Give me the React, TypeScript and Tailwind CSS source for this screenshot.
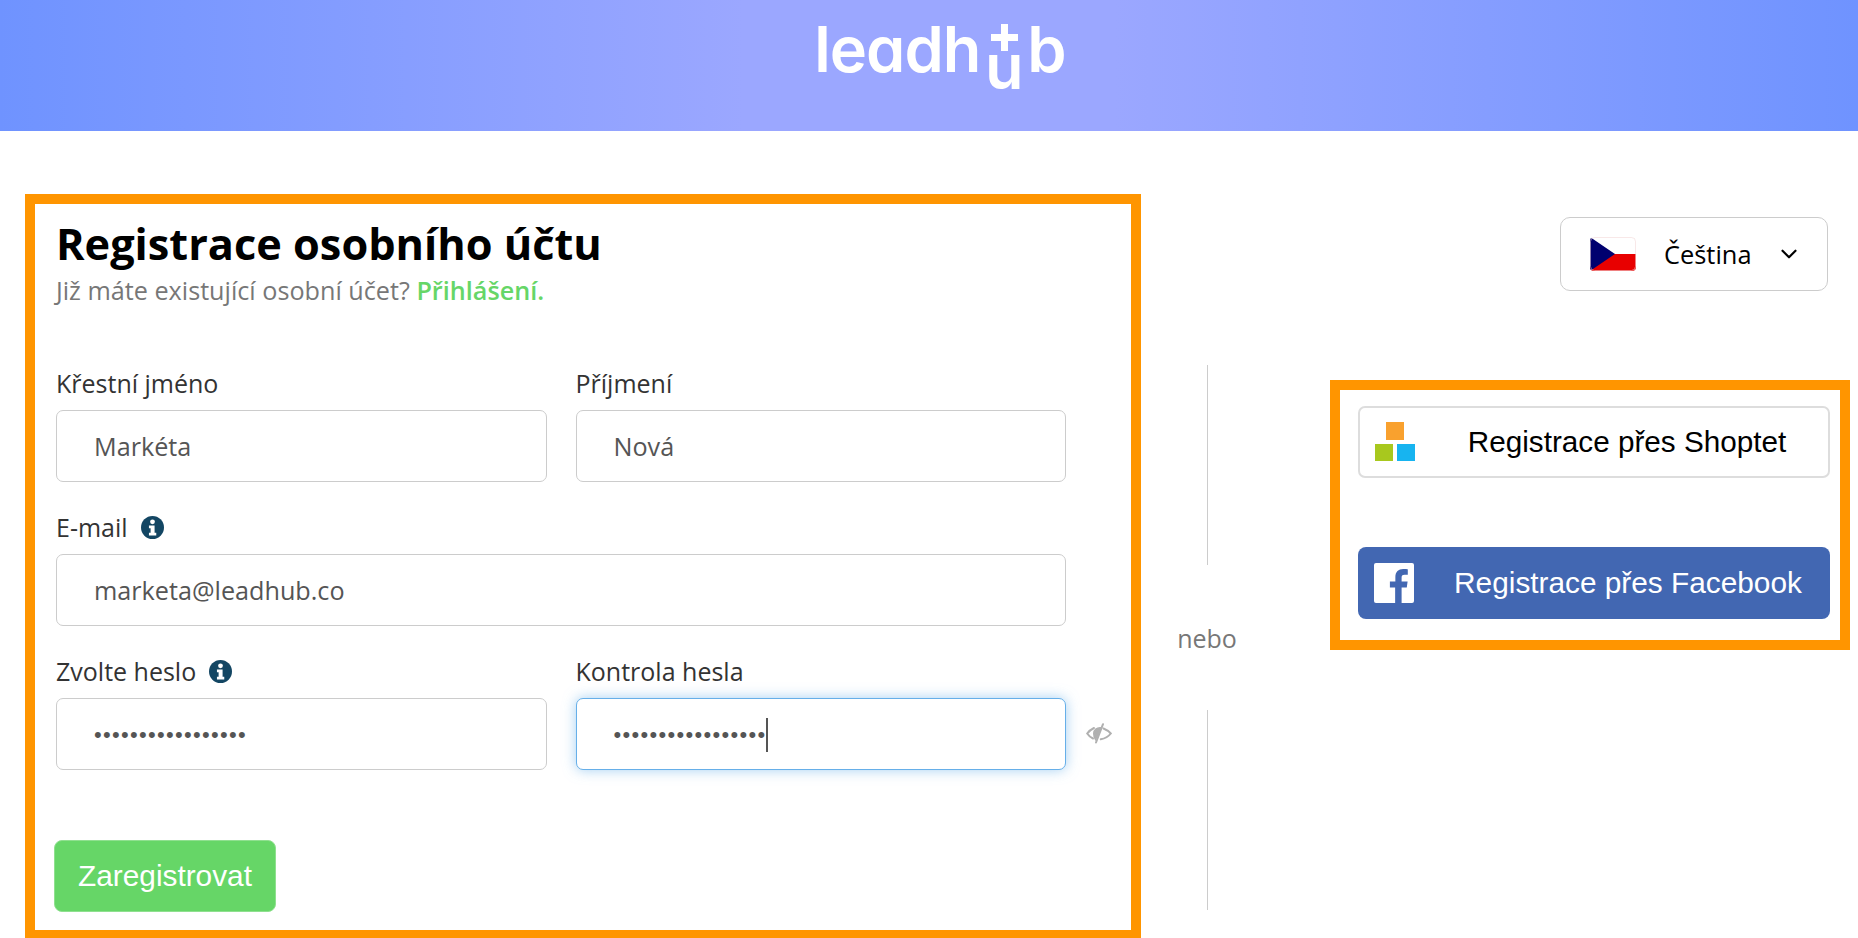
import React from "react";
import { ChevronDown } from "lucide-react";

const sans = "font-['Open_Sans','Noto_Sans',sans-serif]";
const arial = "font-['Liberation_Sans',Arial,sans-serif]";

function InfoIcon() {
  return (
    <svg width="23" height="23" viewBox="0 0 22 22" className="shrink-0">
      <circle cx="11" cy="11" r="11" fill="#134663" />
      <circle cx="11" cy="5.6" r="2.3" fill="#ffffff" />
      <path d="M7.6 9h5.4v7h1.6v2.6H7.6V16h1.6v-4.4H7.6z" fill="#ffffff" />
    </svg>
  );
}

function Label({ children, info }: { children: React.ReactNode; info?: boolean }) {
  return (
    <div className="h-[36px] mb-[9px] flex items-center gap-[13px] text-[25px] leading-[36px] text-[#333333]">
      <span>{children}</span>
      {info && <InfoIcon />}
    </div>
  );
}

function Field({ children, focus }: { children: React.ReactNode; focus?: boolean }) {
  return (
    <div
      className={
        "h-[72px] rounded-[7px] bg-white border flex items-center pl-[37px] pt-[1px] text-[25.2px] text-[#555555] " +
        (focus
          ? "border-[#66afe9] shadow-[0_0_13px_rgba(102,175,233,0.6)]"
          : "border-[#cccccc]")
      }
    >
      {children}
    </div>
  );
}

function Dots({ caret }: { caret?: boolean }) {
  return (
    <div className="flex items-center">
      <span className={arial + " text-[22px] tracking-[1.3px] leading-none"}>•••••••••••••••••</span>
      {caret && <span className="w-[2px] h-[34px] bg-[#555555] -ml-[1px]" />}
    </div>
  );
}

function Flag() {
  return (
    <svg width="46" height="34" viewBox="0 0 46 34" className="shrink-0">
      <defs>
        <clipPath id="flagclip">
          <rect width="46" height="34" rx="4" />
        </clipPath>
      </defs>
      <g clipPath="url(#flagclip)">
        <rect width="46" height="17" fill="#ffffff" />
        <rect y="17" width="46" height="17" fill="#e80000" />
        <path d="M0 0 L25 17 L0 34 Z" fill="#00006f" />
      </g>
      <rect x="0.5" y="0.5" width="45" height="33" rx="4" fill="none" stroke="#f3d9d9" strokeWidth="0.6" />
    </svg>
  );
}

function ShoptetIcon() {
  return (
    <svg width="40" height="39" viewBox="0 0 40 39" className="shrink-0">
      <rect x="11" y="0" width="18" height="18" fill="#f9a12e" />
      <rect x="0" y="22" width="18" height="17" fill="#a8c81e" />
      <rect x="22" y="22" width="18" height="17" fill="#17b4f0" />
    </svg>
  );
}

function FacebookIcon() {
  return (
    <svg width="40" height="40" viewBox="0 0 40 40" className="shrink-0">
      <rect width="40" height="40" rx="2" fill="#ffffff" />
      <path
        d="M27.6 40V24.5h5.2l.8-6h-6v-3.9c0-1.75.48-2.94 3-2.94h3.2V6.3c-.55-.07-2.45-.24-4.66-.24-4.62 0-7.78 2.82-7.78 8v4.46H15.9v6h5.24V40z"
        fill="#4267b2"
      />
    </svg>
  );
}

function EyeOff() {
  return (
    <svg width="26" height="21" viewBox="0 0 26 21" fill="none" stroke="#b0b0b0" strokeWidth="2" strokeLinecap="round" className="shrink-0">
      <path d="M8 5C5 6.5 2.5 8.5 1.2 10.5 2.5 12.5 4.5 14.3 7 15.5" />
      <path d="M17.5 5.5c3 1.2 5.5 3 7.3 5-2 2.6-5.5 5-10 5.8" />
      <path d="M8 10.5c0-3.5 3-6 7-5.5L9.5 16C8.5 14.5 8 12.5 8 10.5z" fill="#b0b0b0" />
      <path d="M17 1.2 10 19.5" />
    </svg>
  );
}

function Logo() {
  return (
    <div className="flex items-baseline text-white font-['Inter',sans-serif] font-semibold [font-feature-settings:'cv11'] text-[63px] leading-none tracking-[-1px]">
      <span>leadh</span>
      <span className="relative w-[47px] text-center">
        <span className="inline-block translate-y-[17px]">u</span>
        <span className="absolute left-[11px] top-[6px] w-[27px] h-[27px]">
          <span className="absolute left-[10px] top-0 w-[7px] h-[27px] bg-white" />
          <span className="absolute left-0 top-[10px] w-[27px] h-[7px] bg-white" />
        </span>
      </span>
      <span>b</span>
    </div>
  );
}

export default function App() {
  return (
    <div className={"w-[1858px] h-[938px] overflow-hidden bg-white " + sans}>
      <header className="h-[131px] flex justify-center pt-[18px] pl-[22px] bg-[linear-gradient(90deg,#6f93ff_0%,#9ba7ff_40%,#9ba7ff_60%,#6f93ff_100%)]">
        <Logo />
      </header>

      <main className="flex items-start">
        <section className="ml-[25px] mt-[63px] w-[1116px] h-[746px] shrink-0 border-[10px] border-[#ff9500] pl-[21px]">
          <h1 className="mt-[15px] text-[43.3px] leading-[50px] font-bold text-black">
            Registrace osobního účtu
          </h1>
          <p className="mt-[5px] text-[25.2px] leading-[32px] text-[#777777]">
            Již máte existující osobní účet?{" "}
            <span className="font-semibold text-[#66d667]">Přihlášení.</span>
          </p>

          <div className="mt-[59px] w-[1010px] grid grid-cols-2 gap-x-[29px] gap-y-[27px]">
            <div className="flex flex-col">
              <Label>Křestní jméno</Label>
              <Field>Markéta</Field>
            </div>
            <div className="flex flex-col">
              <Label>Příjmení</Label>
              <Field>Nová</Field>
            </div>
            <div className="col-span-2 flex flex-col">
              <Label info>E-mail</Label>
              <Field>marketa@leadhub.co</Field>
            </div>
            <div className="flex flex-col">
              <Label info>Zvolte heslo</Label>
              <Field>
                <Dots />
              </Field>
            </div>
            <div className="relative flex flex-col">
              <Label>Kontrola hesla</Label>
              <Field focus>
                <Dots caret />
              </Field>
              <span className="absolute -right-[46px] top-[70px]">
                <EyeOff />
              </span>
            </div>
          </div>

          <button
            className={
              "mt-[70px] -ml-[2px] w-[222px] h-[72px] rounded-[8px] bg-[#66d667] border border-[#8fe08f] text-white text-[29.8px] " + arial
            }
          >
            Zaregistrovat
          </button>
        </section>

        <div className="w-[132px] shrink-0 mt-[234px] flex flex-col items-center">
          <div className="w-[1px] h-[200px] bg-[#cccccc]" />
          <div className="h-[145px] pt-[2px] flex items-center text-[25px] text-[#777777]">nebo</div>
          <div className="w-[1px] h-[200px] bg-[#cccccc]" />
        </div>

        <div className="ml-[57px] w-[520px] flex flex-col items-end">
          <div className="mt-[86px] mr-[22px] w-[268px] h-[74px] rounded-[10px] border border-[#cccccc] flex items-center pl-[29px] text-[25.4px] text-black">
            <Flag />
            <span className="ml-[28px]">Čeština</span>
            <ChevronDown className="ml-[24px] w-[26px] h-[26px]" strokeWidth={2} />
          </div>
          <section className={"mt-[89px] w-[520px] h-[270px] border-[10px] border-[#ff9500] pl-[19px] pt-[16px] " + arial}>
            <button className="-ml-[1px] w-[472px] h-[72px] rounded-[7px] bg-white border-2 border-[#dddddd] relative flex items-center justify-center text-[29.7px] text-black pl-[66px]">
              <span className="absolute left-[15px] top-[14px]">
                <ShoptetIcon />
              </span>
              Registrace přes Shoptet
            </button>
            <button className="mt-[69px] -ml-[1px] w-[472px] h-[72px] rounded-[8px] bg-[#4267b2] relative flex items-center justify-center text-[29.8px] text-white pl-[68px]">
              <span className="absolute left-[16px] top-[16px]">
                <FacebookIcon />
              </span>
              Registrace přes Facebook
            </button>
          </section>
        </div>
      </main>
    </div>
  );
}
